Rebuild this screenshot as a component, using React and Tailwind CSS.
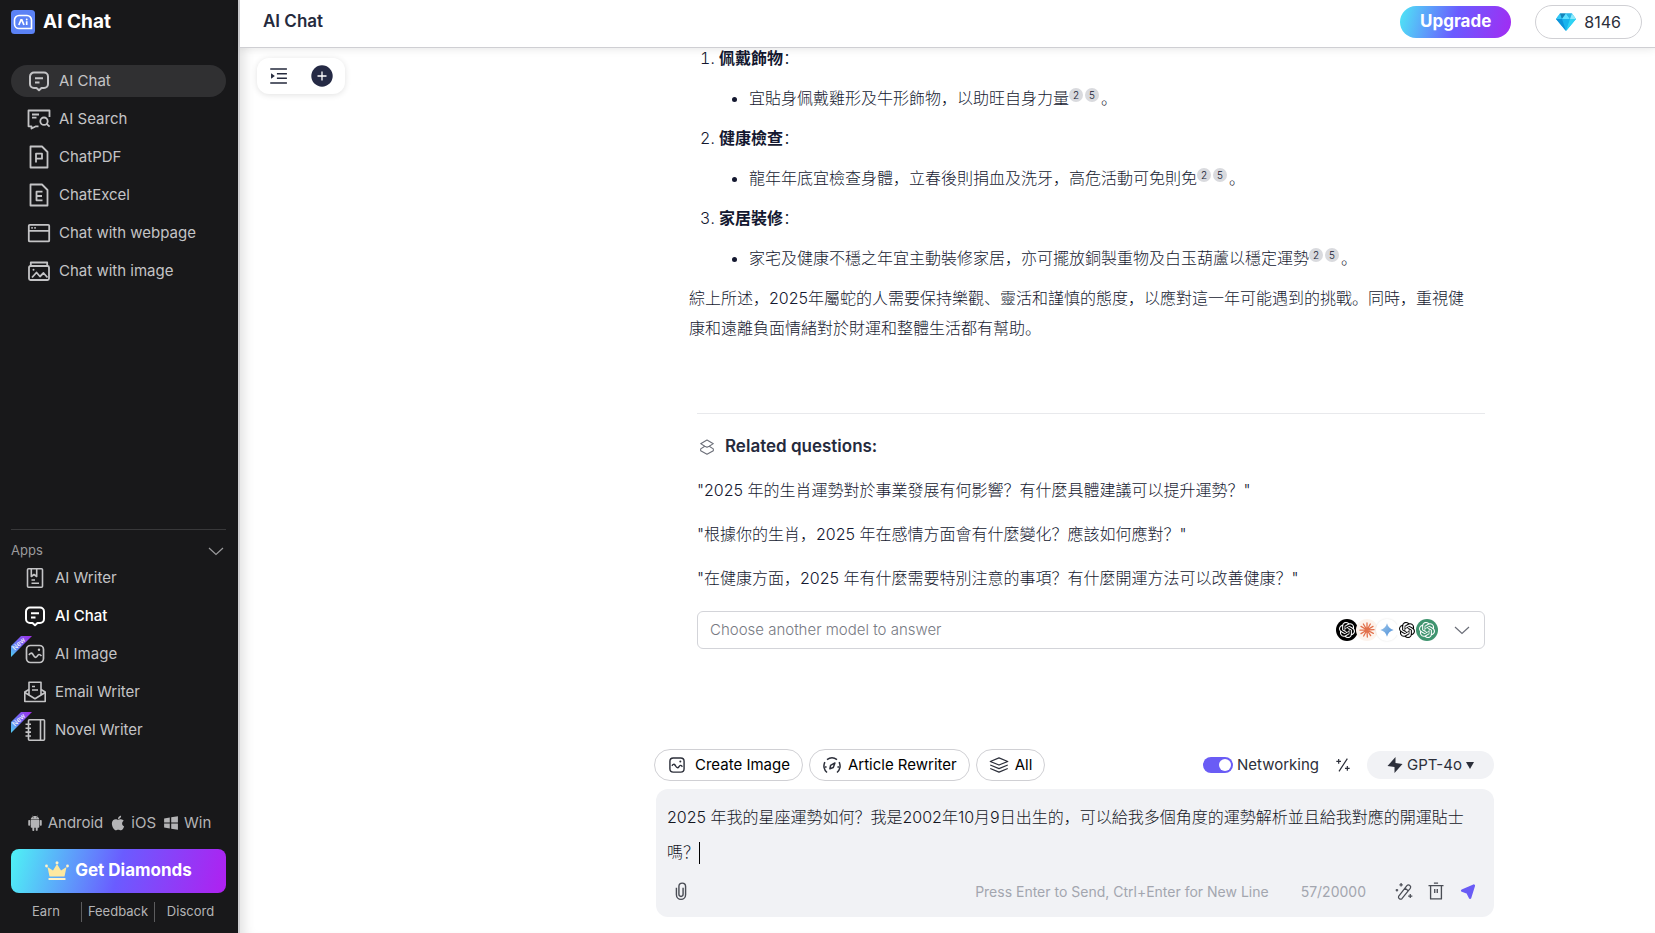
import { useState } from 'react';
import { AiFillAndroid, AiFillApple, AiFillWindows } from 'react-icons/ai';
import { SiOpenai } from 'react-icons/si';

// --- ICONS ---
const Icon = ({ className = 'size-6', width = 1.6, children }) => (
  <svg
    viewBox="0 0 24 24"
    className={`shrink-0 ${className}`}
    fill="none"
    stroke="currentColor"
    strokeWidth={width}
    strokeLinejoin="round"
    aria-hidden="true"
  >
    {children}
  </svg>
);

const ChatIcon = () => (
  <Icon width={2}>
    <path d="M7 3.500h10a4 4 0 0 1 4 4v7.500a4 4 0 0 1-4 4h-2.500L12 21.300 9.500 19H7a4 4 0 0 1-4-4V7.500a4 4 0 0 1 4-4Z" />
    <path d="M8 9.300h8M8 13.400h4.500" />
  </Icon>
);

const SearchIcon = () => (
  <Icon width={1.8}>
    <path d="M22.500 10V3.500h-21v15.800h3V21.500l4.500-2.200h2.500" />
    <path d="M5 7.500h7M5 10.700h4.500" />
    <circle cx="17" cy="14.200" r="3.700" />
    <path d="m19.600 16.900 3 2.800" />
  </Icon>
);

const PdfIcon = () => (
  <Icon width={1.8}>
    <path d="M4.500 1.500H15l5.500 5.500v15.500h-17V1.500Z" />
    <path d="M9 17.500V8.700h6v5H9" />
  </Icon>
);

const ExcelIcon = () => (
  <Icon width={1.8}>
    <path d="M4.500 1.500H15l5.500 5.500v15.500h-17V1.500Z" />
    <path d="M15.500 8.700H9.500v8.600h6M9.500 13h5.500" />
  </Icon>
);

const WebIcon = () => (
  <Icon width={1.8}>
    <rect x="1.800" y="3.800" width="20.400" height="16.600" rx="1" />
    <path d="M1.800 9.800h20.400M4.300 6.800h1.500M7.300 6.800h1.500" />
  </Icon>
);

const PictureIcon = () => (
  <Icon width={1.8}>
    <rect x="2" y="7" width="20" height="14" rx="1.500" />
    <path d="M3.800 7V3.500h16.400V7" />
    <path d="m5 18.500 4.500-5 3.500 4 3.500-3.500 4 4.500" />
    <circle cx="6.500" cy="10.800" r="1" fill="currentColor" stroke="none" />
  </Icon>
);

const WriterIcon = () => (
  <Icon>
    <rect x="4.500" y="2.700" width="15" height="18.600" rx="1" />
    <path d="M8.300 3v7.500l2.700-2 2.700 2V3M8.500 14h3.500M8.500 17.300h7.500" />
  </Icon>
);

const ImageIcon = ({ className }) => (
  <Icon className={className} width={1.7}>
    <rect x="3.500" y="3.500" width="17" height="17" rx="4" />
    <path d="M6 13c1-2 2.600-2.500 3.800-.7.900 1.400 1.400 3 2.900 3 1.700 0 1.700-2.600 3.300-2.800 1-.1 1.600.5 2.500 1.500" />
    <circle cx="16" cy="7.800" r="1.200" fill="currentColor" stroke="none" />
  </Icon>
);

const EmailIcon = () => (
  <Icon>
    <path d="M6 9.500 1.800 12v9.500h20.400V12L18 9.500" />
    <path d="M6 14.500V2.300h12v12.200M1.800 12.500 12 18.800l10.200-6.300" />
    <path d="M9 6.500h3M9 10h6" />
  </Icon>
);

const NovelIcon = () => (
  <Icon>
    <rect x="5.500" y="1.800" width="16" height="20.400" rx="1" />
    <path d="M17.500 2v20M2.500 6.300h5.500M2.500 10.200h5.500M2.500 14.100h5.500M2.500 18h5.500" />
  </Icon>
);

const Chevron = ({ className }) => (
  <svg viewBox="0 0 16 9" className={`h-[9px] w-4 shrink-0 ${className}`} fill="none" stroke="currentColor" strokeWidth="1.200" aria-hidden="true">
    <path d="m1 1 7 6.500L15 1" />
  </svg>
);

const Logo = () => (
  <svg viewBox="0 0 24 24" className="size-6 shrink-0" aria-hidden="true">
    <rect width="24" height="24" rx="3.500" fill="#5b82f5" />
    <path d="M8 5.500h8a4.500 4.500 0 0 1 4.500 4.500v8.500H8A4.500 4.500 0 0 1 3.500 14v-4A4.500 4.500 0 0 1 8 5.500Z" fill="none" stroke="#fff" strokeWidth="1.600" />
    <path d="m7.800 15 2.200-5.200h.8L13 15M15.700 11.300V15" fill="none" stroke="#fff" strokeWidth="1.700" />
    <circle cx="15.700" cy="9.500" r=".9" fill="#fff" />
  </svg>
);

const Crown = () => (
  <svg viewBox="0 0 24 20" className="h-5 w-6 shrink-0" aria-hidden="true">
    <path d="M2.500 6 8 9.500 12 3l4 6.500L21.500 6l-2 9.500h-15Z" fill="#fde9a0" />
    <g fill="#fff3c9">
      <circle cx="1.500" cy="5" r="1.400" />
      <circle cx="12" cy="1.800" r="1.500" />
      <circle cx="22.500" cy="5" r="1.400" />
      <rect x="3.500" y="17" width="17" height="2" rx=".6" />
    </g>
  </svg>
);

const Diamond = () => (
  <svg viewBox="0 0 20 18" className="h-[18px] w-5 shrink-0" aria-hidden="true">
    <path d="M4 .5h12L20 6 10 18 0 6Z" fill="#18b4ee" />
    <path d="M4 .5 6 6H0Z" fill="#37c8f5" />
    <path d="M4 .5h6L6 6Z" fill="#1583b8" />
    <path d="M10 .5 14 6H6Z" fill="#5fe0ff" />
    <path d="M16 .5 14 6l-4-5.500Z" fill="#2bb6e6" />
    <path d="M16 .5 20 6h-6Z" fill="#8be9fb" />
    <path d="M0 6h6l4 12Z" fill="#0d93da" />
    <path d="M14 6h6L10 18Z" fill="#2ed3f3" />
  </svg>
);

const Claude = () => (
  <svg viewBox="0 0 24 24" className="size-4" stroke="#e2714c" strokeWidth="2" strokeLinecap="round" aria-hidden="true">
    <path d="M12 12V1.500M12 12l5-9M12 12l9-5.500M12 12l10.500-.5M12 12l9.500 5M12 12l5.500 8.500M12 12l.5 10.500M12 12l-5 9M12 12l-9 5.500M12 12l-10.500.3M12 12 3 6.500M12 12 6.500 3" />
  </svg>
);

const Gemini = () => (
  <svg viewBox="0 0 24 24" className="size-4" aria-hidden="true">
    <defs>
      <linearGradient id="gemini" x1="0" y1="0" x2="1" y2="1">
        <stop offset="0" stopColor="#9cc6ea" />
        <stop offset="1" stopColor="#4f8fd8" />
      </linearGradient>
    </defs>
    <path d="M12 2c1.500 5.500 4.500 8.500 10 10-5.500 1.500-8.500 4.500-10 10-1.500-5.500-4.500-8.500-10-10 5.500-1.500 8.500-4.500 10-10Z" fill="url(#gemini)" />
  </svg>
);

// --- DATA ---
const NAV = [
  { label: 'AI Chat', icon: ChatIcon, active: true },
  { label: 'AI Search', icon: SearchIcon },
  { label: 'ChatPDF', icon: PdfIcon },
  { label: 'ChatExcel', icon: ExcelIcon },
  { label: 'Chat with webpage', icon: WebIcon },
  { label: 'Chat with image', icon: PictureIcon },
];

const APPS = [
  { label: 'AI Writer', icon: WriterIcon },
  { label: 'AI Chat', icon: ChatIcon, active: true },
  { label: 'AI Image', icon: ImageIcon, isNew: true },
  { label: 'Email Writer', icon: EmailIcon },
  { label: 'Novel Writer', icon: NovelIcon, isNew: true },
];

const TIPS = [
  { title: '佩戴飾物', text: '宜貼身佩戴雞形及牛形飾物，以助旺自身力量' },
  { title: '健康檢查', text: '龍年年底宜檢查身體，立春後則捐血及洗牙，高危活動可免則免' },
  { title: '家居裝修', text: '家宅及健康不穩之年宜主動裝修家居，亦可擺放銅製重物及白玉葫蘆以穩定運勢' },
];

const QUESTIONS = [
  '"2025 年的生肖運勢對於事業發展有何影響？有什麼具體建議可以提升運勢？"',
  '"根據你的生肖，2025 年在感情方面會有什麼變化？應該如何應對？"',
  '"在健康方面，2025 年有什麼需要特別注意的事項？有什麼開運方法可以改善健康？"',
];

function NewRibbon() {
  return (
    <svg viewBox="0 0 21 21" className="absolute left-0 top-[-2px] size-[21px]" aria-hidden="true">
      <defs>
        <linearGradient id="ribbon" x1="0" y1="1" x2="1" y2="0">
          <stop offset="0" stopColor="#4fd0f2" />
          <stop offset=".5" stopColor="#6f6cf5" />
          <stop offset="1" stopColor="#a32be8" />
        </linearGradient>
      </defs>
      <path d="M0 10 10 0h11L0 21Z" fill="url(#ribbon)" />
      <text x="8" y="10" transform="rotate(-45 8 8)" textAnchor="middle" fontSize="7" fill="#fff">New</text>
    </svg>
  );
}

function Sidebar() {
  return (
    <aside className="flex w-[240px] shrink-0 flex-col border-r-2 border-[#cfcfd2] bg-[#18181a] pl-[11px] pr-3 text-[#c4c4c6]">
      <div className="flex h-11 items-center gap-2">
        <Logo />
        <span className="text-[19px] font-bold text-white">AI Chat</span>
      </div>

      <nav className="mt-[21px] flex flex-col gap-1.5 text-[15px]">
        {NAV.map(({ label, icon: NavIcon, active }) => (
          <a
            key={label}
            href="#"
            className={`flex h-8 items-center gap-2 rounded-full pl-4 ${active ? 'bg-[#303032]' : 'hover:bg-[#242426]'}`}
          >
            <NavIcon />
            {label}
          </a>
        ))}
      </nav>

      <div className="mt-auto border-t border-[#38383a] pt-2.5">
        <button type="button" className="flex h-[22px] w-full items-center justify-between pr-0.5 text-[13px] text-[#9b9b9d]">
          Apps
          <Chevron />
        </button>
        <nav className="flex flex-col gap-1.5 text-[15px]">
          {APPS.map(({ label, icon: AppIcon, active, isNew }) => (
            <a key={label} href="#" className={`relative flex h-8 items-center gap-2 pl-3 ${active ? 'font-medium text-white' : ''}`}>
              {isNew && <NewRibbon />}
              <AppIcon />
              {label}
            </a>
          ))}
        </nav>
      </div>

      <div className="mt-[65px] flex h-6 items-center justify-center gap-1.5 text-[15px] text-[#b4b4b6]">
        <a href="#" className="flex items-center gap-1"><AiFillAndroid size={18} />Android</a>
        <a href="#" className="flex items-center gap-1"><AiFillApple size={18} />iOS</a>
        <a href="#" className="flex items-center gap-1"><AiFillWindows size={18} />Win</a>
      </div>

      <button
        type="button"
        className="mt-3.5 flex h-11 items-center justify-center gap-1.5 rounded-lg bg-linear-[105deg,#4ef3f5,#6a5cff_50%,#b020f0] text-[17px] font-bold text-white"
      >
        <Crown />
        Get Diamonds
      </button>

      <div className="mb-[11px] mt-[9px] grid h-5 grid-cols-[71px_1fr_71px] items-center divide-x divide-[#5c5c5e] text-center text-[13px] text-[#b4b4b6]">
        <a href="#">Earn</a>
        <a href="#">Feedback</a>
        <a href="#">Discord</a>
      </div>
    </aside>
  );
}

function Header() {
  return (
    <header className="z-10 flex h-12 shrink-0 items-center border-b border-[#cfcfd3] bg-white pb-1 pl-[23px] pr-[13px] shadow-[0_2px_8px_rgba(0,0,0,0.08)]">
      <h1 className="mr-auto text-[17px] font-semibold text-[#252a3d]">AI Chat</h1>
      <button type="button" className="h-8 rounded-full bg-linear-[105deg,#4ee8f5,#6a5cff_50%,#a32bf2] px-5 text-[17px] font-bold text-white">
        Upgrade
      </button>
      <button type="button" className="ml-6 flex h-[34px] items-center gap-2 rounded-full border border-[#d0d0d4] px-5 text-base text-[#2c2f3a]">
        <Diamond />
        8146
      </button>
    </header>
  );
}

function Cite({ n }) {
  return (
    <a href="#" className="mr-0.5 inline-flex size-[14px] items-center justify-center rounded-full bg-[#d9dade] align-[5px] text-[10px] leading-none">
      {n}
    </a>
  );
}

function Answer() {
  return (
    <article className="mr-[9px] pl-[35px] font-light leading-[30px] text-[#141830]">
      <ol className="list-decimal space-y-2.5 pl-[30px]">
        {TIPS.map((tip) => (
          <li key={tip.title}>
            <strong className="font-bold">{tip.title}</strong>：
            <ul className="mt-2.5 list-disc pl-[30px]">
              <li>
                {tip.text}<Cite n={2} /><Cite n={5} />。
              </li>
            </ul>
          </li>
        ))}
      </ol>
      <p className="mt-2.5 pr-3">
        綜上所述，2025年屬蛇的人需要保持樂觀、靈活和謹慎的態度，以應對這一年可能遇到的挑戰。同時，重視健康和遠離負面情緒對於財運和整體生活都有幫助。
      </p>
    </article>
  );
}

function Related() {
  return (
    <section className="ml-[43px] mr-[9px] mt-[70px] border-t border-[#e8e9ec] pt-[21px] text-[#252a3d]">
      <h2 className="ml-0.5 flex h-6 items-center gap-2.5 text-[17px] font-semibold">
        <Icon className="size-4 text-[#6b6e78]" width={1.6}>
          <path d="m12 1.500 9.500 5.500-6.200 3.800L12 12.500l-3.300-1.700L2.500 7Z" />
          <path d="m8.700 10.800-6.200 4v2.700l9.500 5.300 9.500-5.300v-2.700l-6.200-4" />
        </Icon>
        Related questions:
      </h2>
      <div className="mt-[9px] flex flex-col items-start font-light text-[#141830]">
        {QUESTIONS.map((q) => (
          <button key={q} type="button" className="h-11 text-left">{q}</button>
        ))}
      </div>
      <label className="mt-[11px] flex h-[38px] items-center rounded-md border border-[#d3d4d9] pl-3 pr-3.5 text-[#777a83]">
        <select aria-label="Choose another model to answer" className="min-w-0 flex-1 appearance-none text-[15px] font-light outline-none">
          <option>Choose another model to answer</option>
        </select>
        <span className="flex -space-x-0.5">
          <span className="flex size-[22px] items-center justify-center rounded-full bg-black text-white"><SiOpenai size={16} /></span>
          <span className="flex size-[22px] items-center justify-center rounded-full bg-[#fdf3ec]"><Claude /></span>
          <span className="flex size-[22px] items-center justify-center rounded-full bg-white shadow-[0_0_2px_rgba(0,0,0,0.12)]"><Gemini /></span>
          <span className="flex size-[22px] items-center justify-center rounded-full bg-white text-black"><SiOpenai size={16} /></span>
          <span className="flex size-[22px] items-center justify-center rounded-full bg-[#3f946f] text-white"><SiOpenai size={16} /></span>
        </span>
        <Chevron className="ml-4 text-[#6b6e78]" />
      </label>
    </section>
  );
}

function Composer() {
  const [text, setText] = useState(
    '2025 年我的星座運勢如何？我是2002年10月9日出生的，可以給我多個角度的運勢解析並且給我對應的開運貼士嗎？'
  );

  return (
    <footer className="mb-4 shrink-0 text-[#2c2f3a]">
      {/* Shortcuts and model */}
      <div className="flex items-center text-[15px]">
        <div className="flex gap-1.5 text-black">
          <button type="button" className="flex h-8 items-center gap-2 rounded-full border border-[#d0d0d4] px-3">
            <ImageIcon className="size-5 text-[#2c2f3a]" />
            Create Image
          </button>
          <button type="button" className="flex h-8 items-center gap-1.5 rounded-full border border-[#d0d0d4] px-3">
            <Icon className="size-5 text-[#2c2f3a]" width={1.8}>
              <path d="M6 21a10 10 0 0 1-2.500-12.500M6 5.500a10 10 0 0 1 12 0M20.500 8.500A10 10 0 0 1 18 21" />
              <path d="m9.500 16.500.8-4 5.200-3-2 5.500Z" />
              <path d="M3.500 14.500h2M18.500 14.500h2" />
            </Icon>
            Article Rewriter
          </button>
          <button type="button" className="flex h-8 items-center gap-1.5 rounded-full border border-[#d0d0d4] px-3">
            <Icon className="size-5 text-[#2c2f3a]" width={1.5}>
              <path d="m12 3.500 10.500 4.300L12 12 1.500 7.800Z" />
              <path d="M1.500 12 12 16.300 22.500 12M1.500 16.200 12 20.500l10.500-4.300" />
            </Icon>
            All
          </button>
        </div>

        <label className="ml-auto flex items-center gap-1">
          <input
            type="checkbox"
            defaultChecked
            className="flex h-4 w-[30px] appearance-none items-center rounded-full bg-gray-300 p-0.5 before:size-3 before:rounded-full before:bg-white checked:justify-end checked:bg-[#6a5cf5]"
          />
          Networking
        </label>
        <button type="button" aria-label="Optimize prompt" className="mx-3.5 p-0.5">
          <Icon className="size-4" width={1.8}>
            <path d="M18.500 2.500 6 21.500M5.500 3v7M2 6.500h7M18.500 13.500v7M15 17h7" />
          </Icon>
        </button>
        <label className="flex h-7 items-center gap-1 rounded-full bg-[#f1f2f5] px-5">
          <svg viewBox="0 0 16 18" className="h-[18px] w-4" fill="currentColor" aria-hidden="true">
            <path d="M8.500 1v6L15.500 8 7.500 17v-6L.5 10Z" />
          </svg>
          <select aria-label="Model" className="appearance-none outline-none">
            <option>GPT-4o</option>
          </select>
          <svg viewBox="0 0 8 7" className="h-[7px] w-2" fill="currentColor" aria-hidden="true">
            <path d="M0 0h8L4 7Z" />
          </svg>
        </label>
      </div>

      {/* Message box */}
      <div className="relative ml-0.5 mt-2 rounded-xl bg-[#f1f2f5] pb-[11px] pl-[11px] pr-4 pt-[11px]">
        <textarea
          aria-label="Message"
          rows={2}
          value={text}
          onChange={(e) => setText(e.target.value)}
          className="block h-[70px] w-full resize-none overflow-hidden pr-2 text-base font-light leading-[35px] text-[#14161f] caret-transparent outline-none"
        />
        <span className="absolute left-[43px] top-[53px] h-[22px] w-px bg-black" />
        <div className="mt-1.5 flex h-[30px] items-center text-[14px] text-[#a3a6af]">
          <button type="button" aria-label="Attach a file" className="mr-auto pl-1 text-[#4a4d55]">
            <Icon className="size-5" width={1.7}>
              <path d="M6.500 8v8.500a5.500 5.500 0 0 0 11 0V6.500a4 4 0 0 0-8 0V16a2.500 2.500 0 0 0 5 0V8" />
            </Icon>
          </button>
          <span>Press Enter to Send, Ctrl+Enter for New Line</span>
          <span className="ml-8 mr-7">57/20000</span>
          <div className="flex gap-3 text-[#4a4d55]">
            <button type="button" aria-label="Polish">
              <Icon className="size-5" width={1.500}>
                <path d="m5.500 18.500 10-13a2.600 2.600 0 0 1 4 3.300l-10 12.400a2.500 2.500 0 0 1-4-2.700ZM13 8.500l4 3.300" />
                <path d="M8.500 2.500v4M6.500 4.500h4M3.500 9.500v3M2 11h3M19.500 15.500v5M17 18h5" />
              </Icon>
            </button>
            <button type="button" aria-label="Clear">
              <Icon className="size-5" width={1.6}>
                <path d="M3 5.500h18M5.500 5.500v16h13v-16M9.500 2.500h5M10.500 9.500v5M13.500 9.500v5" />
              </Icon>
            </button>
            <button type="button" aria-label="Send" className="text-[#6a5cf5]">
              <Icon className="size-5">
                <path d="M19 5.500 5 11.500l6.500 2.500L14.500 20Z" fill="currentColor" strokeWidth="3" />
              </Icon>
            </button>
          </div>
        </div>
      </div>
    </footer>
  );
}

export default function App() {
  return (
    <div className="flex h-screen overflow-hidden bg-white font-[family-name:'Inter','Noto_Sans_CJK_SC',sans-serif] text-base">
      <Sidebar />
      <div className="flex min-w-0 flex-1 flex-col">
        <Header />
        <main className="relative flex min-h-0 flex-1 flex-col pl-[414px] pr-[161px] shadow-[inset_12px_0_12px_-8px_rgba(0,0,0,0.12)]">
          <div className="absolute left-[17px] top-2.5 flex h-9 items-center gap-[22px] rounded-xl bg-white px-3 text-[#252a3d] shadow-[0_1px_6px_rgba(0,0,0,0.12)]">
            <button type="button" aria-label="Toggle history">
              <Icon className="size-5" width={1.8}>
                <path d="M1.500 3.500h20M9.500 9.200h12M9.500 14.800h12M1.500 20.500h20" />
                <path d="m2.500 8.800 4.500 3.200-4.500 3.200Z" fill="currentColor" stroke="none" />
              </Icon>
            </button>
            <button type="button" aria-label="New chat">
              <svg viewBox="0 0 22 22" className="size-[22px]" aria-hidden="true">
                <circle cx="11" cy="11" r="10.700" fill="#252a45" />
                <path d="M11 6.500v9M6.500 11h9" stroke="#fff" strokeWidth="1.300" />
              </svg>
            </button>
          </div>

          {/* Conversation, scrolled to its end */}
          <div className="flex min-h-0 flex-1 flex-col justify-end overflow-hidden pb-[100px]">
            <Answer />
            <Related />
          </div>
          <Composer />
        </main>
      </div>
    </div>
  );
}
